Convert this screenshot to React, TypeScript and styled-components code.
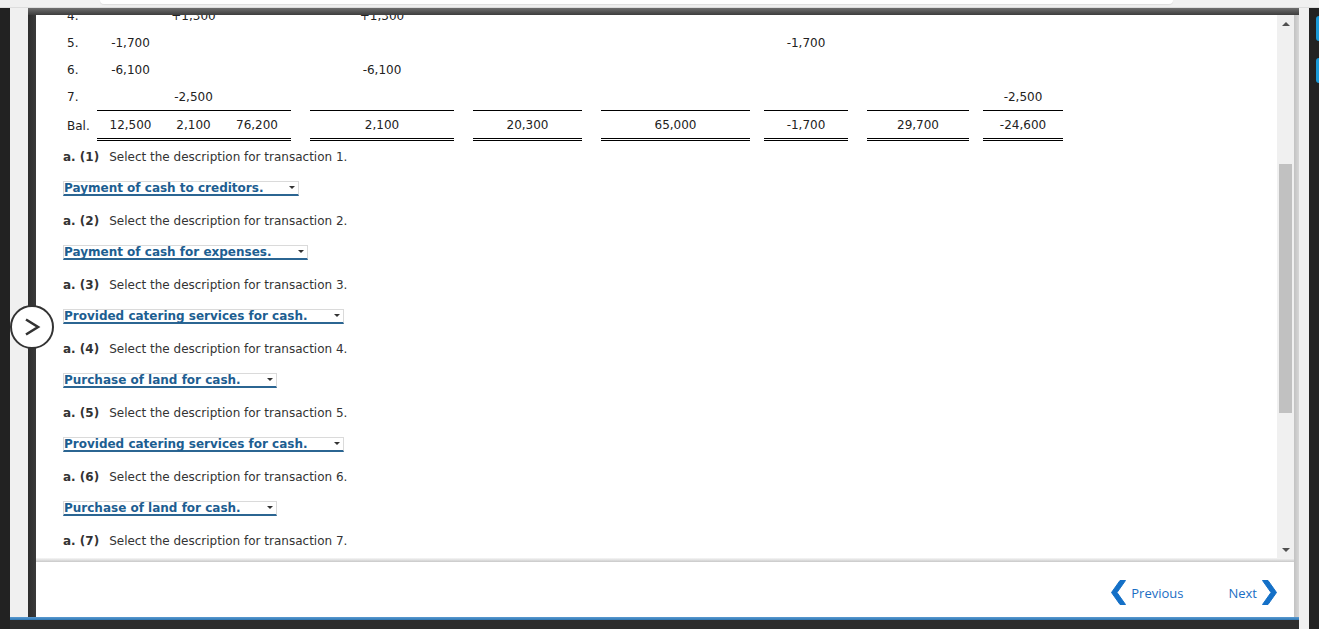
import React from "react";
import styled, { createGlobalStyle } from "styled-components";

const GlobalStyle = createGlobalStyle`
  html, body {
    margin: 0;
    padding: 0;
    width: 1319px;
    height: 629px;
    overflow: hidden;
    background: #222;
  }
  * { box-sizing: border-box; }
`;

const Page = styled.div`
  position: relative;
  width: 1319px;
  height: 629px;
  display: flex;
  flex-direction: column;
  font-family: "DejaVu Sans", Verdana, sans-serif;
  font-size: 12px;
`;

const TopStrip = styled.div`
  height: 8px;
  background: #f0f0f0;
  border-bottom: 1px solid #dddddd;
  padding-left: 100px;
`;

const TopTab = styled.div`
  width: 1073px;
  height: 4px;
  background: #ffffff;
  border-radius: 0 0 5px 5px;
  box-shadow: 0 1px 1px rgba(0, 0, 0, 0.08);
`;

const Body = styled.div`
  flex: 1;
  display: flex;
  min-height: 0;
`;

const Rail = styled.div`
  width: 10px;
  background: #222222;
  display: flex;
  flex-direction: column;
  align-items: flex-end;
  padding-top: 8px;
  gap: 17px;
`;

const RailTab = styled.div`
  width: 3px;
  height: 25px;
  background: #1b9ad8;
  border-radius: 4px 0 0 4px;
`;

const Stage = styled.div`
  flex: 1;
  display: flex;
  flex-direction: column;
  min-width: 0;
`;

const StageMain = styled.div`
  flex: 1;
  display: flex;
  min-height: 0;
`;

const Gutter = styled.div`
  width: ${(p: { $w: number }) => p.$w}px;
  background: #f0f0f0;
  flex-shrink: 0;
`;

const Frame = styled.div`
  flex: 1;
  display: flex;
  flex-direction: column;
  min-width: 0;
`;

const FrameBar = styled.div`
  height: 7px;
  background: linear-gradient(#6e6e6e, #3d3d3d);
  flex-shrink: 0;
`;

const Panel = styled.div`
  flex: 1;
  display: flex;
  min-height: 0;
`;

const EdgeStrip = styled.div`
  width: 8px;
  background: linear-gradient(90deg, #2e2e2e, #3a3a3a);
  flex-shrink: 0;
`;

const PanelShadow = styled.div`
  width: 5px;
  background: linear-gradient(90deg, #c2c2c2, #d6d6d6);
  flex-shrink: 0;
`;

const Inner = styled.div`
  flex: 1;
  display: flex;
  flex-direction: column;
  min-width: 0;
  background: #ffffff;
`;

const ContentRow = styled.div`
  flex: 1;
  display: flex;
  min-height: 0;
`;

const ScrollArea = styled.div`
  flex: 1;
  overflow: hidden;
  background: #ffffff;
  padding-left: 27px;
  color: #222222;
`;

const Scrollbar = styled.div`
  width: 17px;
  background: #f0f0f0;
  display: flex;
  flex-direction: column;
  flex-shrink: 0;
`;

const ScrollButton = styled.div`
  height: 17px;
  display: flex;
  align-items: center;
  justify-content: center;
  flex-shrink: 0;
`;

const Triangle = styled.div<{ $down?: boolean }>`
  width: 0;
  height: 0;
  border-left: 4px solid transparent;
  border-right: 4px solid transparent;
  ${(p) =>
    p.$down
      ? "border-top: 4px solid #505050;"
      : "border-bottom: 4px solid #505050;"}
`;

const Track = styled.div`
  flex: 1;
  padding: 132px 2px 0 2px;
`;

const Thumb = styled.div`
  height: 249px;
  background: #c1c1c1;
`;

const Divider = styled.div`
  height: 4px;
  background: linear-gradient(#f6f6f6, #c8c8c8);
  flex-shrink: 0;
`;

const Footer = styled.div`
  height: 55px;
  display: flex;
  align-items: center;
  justify-content: flex-end;
  padding: 6px 17px 0 0;
  gap: 45px;
  font-family: "Open Sans", "Segoe UI", sans-serif;
  font-size: 13px;
  color: #1a6ec4;
  flex-shrink: 0;
`;

const NavLink = styled.a`
  display: flex;
  align-items: center;
  gap: 5px;
  color: #1a6ec4;
  text-decoration: none;
  cursor: pointer;
`;

const BlueLine = styled.div`
  height: 3px;
  background: linear-gradient(#5a9ad0, #2f78b5);
  flex-shrink: 0;
`;

const BottomBar = styled.div`
  height: 9px;
  background: #2d2d2d;
  flex-shrink: 0;
`;

/* Table */

const Ledger = styled.div`
  margin-top: -13px;
  display: flex;
  flex-direction: column;
`;

const LedgerRow = styled.div<{ $total?: boolean }>`
  display: flex;
  height: ${(p) => (p.$total ? 31 : 27)}px;
`;

const RowLabel = styled.div`
  width: 34px;
  padding-left: 4px;
  display: flex;
  align-items: center;
  color: #222222;
`;

const Cell = styled.div<{ $w: number; $gap: number; $total?: boolean }>`
  width: ${(p) => p.$w}px;
  margin-left: ${(p) => p.$gap}px;
  display: flex;
  align-items: center;
  justify-content: center;
  color: #222222;
  ${(p) =>
    p.$total
      ? "border-top: 1px solid #000; border-bottom: 3px double #000;"
      : ""}
`;

/* Questions */

const Questions = styled.div`
  display: flex;
  flex-direction: column;
  align-items: flex-start;
  padding-top: 8px;
`;

const Prompt = styled.div`
  line-height: 16px;
  height: 16px;
  color: #333333;
  white-space: nowrap;
`;

const PromptTag = styled.span`
  font-weight: bold;
  margin-right: 10px;
`;

const SelectBox = styled.div`
  margin: 16px 0 17px 0;
  height: 15px;
  display: inline-flex;
  align-items: center;
  border: 1px solid #dadada;
  border-bottom: 2px solid #2b6592;
  padding: 0 3px 0 0;
  font-weight: bold;
  color: #1d5e91;
  line-height: 12px;
  white-space: nowrap;
  cursor: pointer;
`;

const SelectArrow = styled.span`
  margin-left: 26px;
  margin-top: -2px;
  width: 0;
  height: 0;
  border-left: 3px solid transparent;
  border-right: 3px solid transparent;
  border-top: 3px solid #333333;
`;

const CircleButton = styled.div`
  position: absolute;
  left: 10px;
  top: 305px;
  width: 44px;
  height: 44px;
  border-radius: 50%;
  background: #ffffff;
  border: 2.5px solid #333333;
  display: flex;
  align-items: center;
  justify-content: center;
`;

const columns = [
  { w: 67, gap: 0 },
  { w: 59, gap: 0 },
  { w: 68, gap: 0 },
  { w: 144, gap: 19 },
  { w: 109, gap: 19 },
  { w: 149, gap: 19 },
  { w: 84, gap: 14 },
  { w: 102, gap: 19 },
  { w: 80, gap: 14 },
];

const rows: { label: string; vals: string[]; total?: boolean }[] = [
  { label: "4.", vals: ["", "+1,300", "", "+1,300", "", "", "", "", ""] },
  { label: "5.", vals: ["-1,700", "", "", "", "", "", "-1,700", "", ""] },
  { label: "6.", vals: ["-6,100", "", "", "-6,100", "", "", "", "", ""] },
  { label: "7.", vals: ["", "-2,500", "", "", "", "", "", "", "-2,500"] },
  {
    label: "Bal.",
    vals: ["12,500", "2,100", "76,200", "2,100", "20,300", "65,000", "-1,700", "29,700", "-24,600"],
    total: true,
  },
];

const answers = [
  "Payment of cash to creditors.",
  "Payment of cash for expenses.",
  "Provided catering services for cash.",
  "Purchase of land for cash.",
  "Provided catering services for cash.",
  "Purchase of land for cash.",
];

const Chevron = ({ dir }: { dir: "left" | "right" }) => (
  <svg width="15" height="25" viewBox="0 0 15 25" aria-hidden="true">
    <polygon
      points={
        dir === "left"
          ? "9,0.5 14.5,0.5 6,12.5 14.5,24.5 9,24.5 0.5,12.5"
          : "6,0.5 0.5,0.5 9,12.5 0.5,24.5 6,24.5 14.5,12.5"
      }
      fill="#1470c7"
      stroke="#1470c7"
      strokeWidth="1"
      strokeLinejoin="round"
    />
  </svg>
);

export default function App() {
  return (
    <>
      <GlobalStyle />
      <Page>
        <TopStrip>
          <TopTab />
        </TopStrip>
        <Body>
          <Rail />
          <Stage>
            <StageMain>
              <Gutter $w={18} />
              <Frame>
                <FrameBar />
                <Panel>
                  <EdgeStrip />
                  <Inner>
                    <ContentRow>
                      <ScrollArea>
                        <Ledger>
                          {rows.map((r) => (
                            <LedgerRow key={r.label} $total={r.total}>
                              <RowLabel>{r.label}</RowLabel>
                              {columns.map((c, i) => (
                                <Cell key={i} $w={c.w} $gap={c.gap} $total={r.total}>
                                  {r.vals[i]}
                                </Cell>
                              ))}
                            </LedgerRow>
                          ))}
                        </Ledger>
                        <Questions>
                          {answers.map((a, i) => (
                            <React.Fragment key={i}>
                              <Prompt>
                                <PromptTag>a. ({i + 1})</PromptTag>
                                Select the description for transaction {i + 1}.
                              </Prompt>
                              <SelectBox role="combobox">
                                {a}
                                <SelectArrow />
                              </SelectBox>
                            </React.Fragment>
                          ))}
                          <Prompt>
                            <PromptTag>a. (7)</PromptTag>
                            Select the description for transaction 7.
                          </Prompt>
                        </Questions>
                      </ScrollArea>
                      <Scrollbar>
                        <ScrollButton>
                          <Triangle />
                        </ScrollButton>
                        <Track>
                          <Thumb />
                        </Track>
                        <ScrollButton>
                          <Triangle $down />
                        </ScrollButton>
                      </Scrollbar>
                    </ContentRow>
                    <Divider />
                    <Footer>
                      <NavLink>
                        <Chevron dir="left" />
                        Previous
                      </NavLink>
                      <NavLink>
                        Next
                        <Chevron dir="right" />
                      </NavLink>
                    </Footer>
                  </Inner>
                  <PanelShadow />
                </Panel>
              </Frame>
            </StageMain>
            <BlueLine />
            <BottomBar />
          </Stage>
          <Gutter $w={10} />
          <Rail>
            <RailTab />
            <RailTab />
          </Rail>
        </Body>
        <CircleButton>
          <svg width="18" height="20" viewBox="0 0 18 20" aria-hidden="true">
            <polyline
              points="3,2.5 15,10 3,17.5"
              fill="none"
              stroke="#333333"
              strokeWidth="2.6"
              strokeLinejoin="miter"
            />
          </svg>
        </CircleButton>
      </Page>
    </>
  );
}
